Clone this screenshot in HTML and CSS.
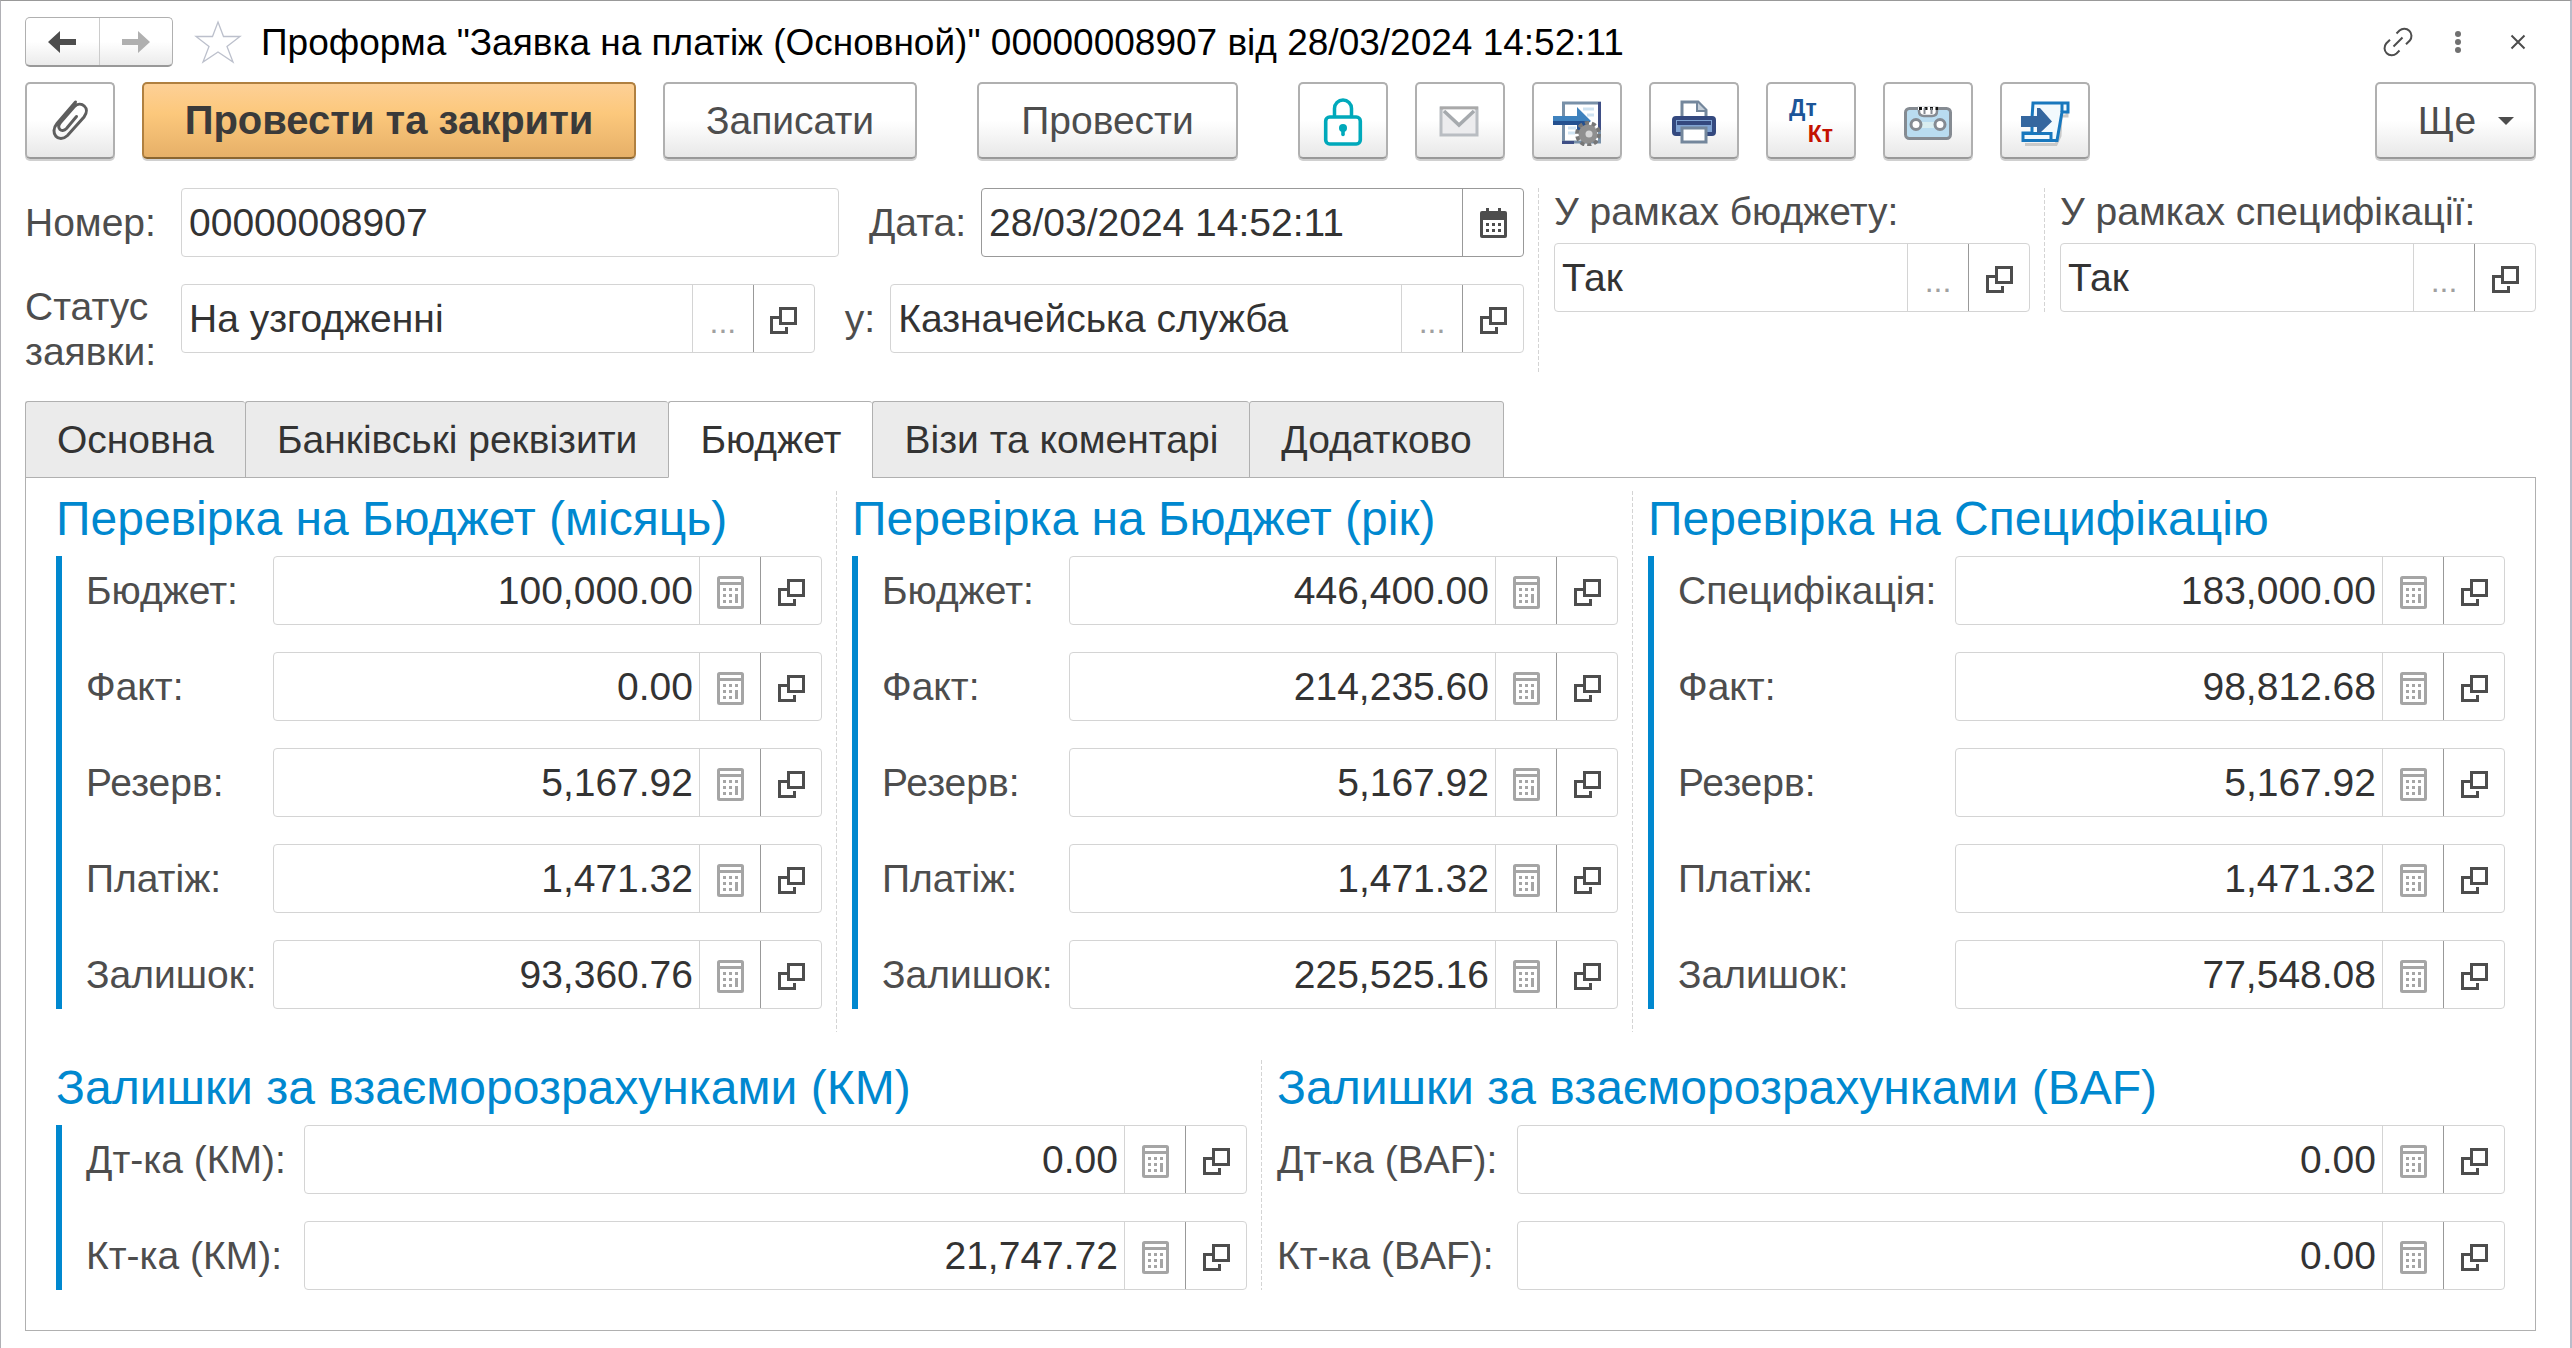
FILE: index.html
```html
<!DOCTYPE html>
<html lang="uk">
<head>
<meta charset="utf-8">
<title>Заявка на платіж</title>
<link rel="stylesheet" href="styles.css">
</head>
<body>
<svg class="sprite" aria-hidden="true">
  <symbol id="open" viewBox="0 0 27 27"><path d="M9 9H0V27H18V20H15V24H3V12H9Z" fill="#4d4d4d"/><path d="M10.500 1.500H25.500V16.500H10.500Z" fill="none" stroke="#4d4d4d" stroke-width="3"/></symbol>
  <symbol id="calc" viewBox="0 0 27 33"><rect x="1.500" y="1.500" width="24" height="30" rx="1" fill="none" stroke="#a5a5a5" stroke-width="3"/><path d="M3 6H24V9H3ZM6 12h3v3H6zM12 12h3v3h-3zM18 12h3v3h-3zM6 18h3v3H6zM12 18h3v3h-3zM18 18h3v9h-3zM6 24h3v3H6zM12 24h3v3h-3z" fill="#a5a5a5"/></symbol>
</svg>
<main class="window">
  <header class="titlebar">
    <div class="nav">
      <button type="button" aria-label="Назад"><svg width="28" height="22" viewBox="0 0 28 22"><path d="M0 11 12 0V8H28V14H12V22Z" fill="#4d4d4d"/></svg></button>
      <button type="button" aria-label="Вперед"><svg width="28" height="22" viewBox="0 0 28 22"><path d="M28 11 16 0V8H0V14H16V22Z" fill="#b0b0b0"/></svg></button>
    </div>
    <button type="button" class="plain star" aria-label="Обране"><svg width="48" height="44" viewBox="0 0 48 44"><path d="M24 2 29.500 16.500H46L33 26.500 39 42 24 32 9 42 15 26.500 2 16.500H18.500Z" fill="none" stroke="#bcc0cc" stroke-width="1.300"/></svg></button>
    <h1>Проформа "Заявка на платіж (Основной)" 00000008907 від 28/03/2024 14:52:11</h1>
    <div class="window-tools">
      <button type="button" class="plain" aria-label="Посилання"><svg width="30" height="30" viewBox="0 0 30 30" fill="none" stroke="#4d4d4d" stroke-width="2"><path d="M13.500 6.500 16.500 3.500A7.200 7.200 0 0 1 26.800 13.500L23 17.200M16.500 23.500 13.500 26.500A7.200 7.200 0 0 1 3.200 16.500L7 12.800M10.500 19.500 19.500 10.500"/></svg></button>
      <button type="button" class="plain" aria-label="Меню"><svg width="30" height="30" viewBox="0 0 30 30" fill="#707070"><circle cx="15" cy="7" r="3"/><circle cx="15" cy="15" r="3"/><circle cx="15" cy="23" r="3"/></svg></button>
      <button type="button" class="plain" aria-label="Закрити"><svg width="30" height="30" viewBox="0 0 30 30"><path d="M8.500 8.500 21.500 21.500M21.500 8.500 8.500 21.500" stroke="#4d4d4d" stroke-width="2"/></svg></button>
    </div>
  </header>

  <div class="toolbar">
    <button type="button" class="btn icon" aria-label="Файли"><svg width="50" height="50" viewBox="0 0 50 50"><path d="M30.500 6 12 27.500C4 37 13.500 48 22.500 39.500L39 21C46 12 36 4 29 11L15.500 26.500C11 32 16.500 37.500 21.500 32.500L31.500 20.500" fill="none" stroke="#5e5e5e" stroke-width="3" stroke-linecap="round"/></svg></button>
    <button type="button" class="btn primary">Провести та закрити</button>
    <button type="button" class="btn save">Записати</button>
    <button type="button" class="btn post">Провести</button>
    <button type="button" class="btn icon" aria-label="Блокування"><svg width="50" height="50" viewBox="0 0 50 50"><path d="M16.500 20V12.500a8.500 8.500 0 0 1 17 0V20" fill="none" stroke="#00a9bb" stroke-width="3.500"/><rect x="7.700" y="21" width="34.600" height="27" rx="4" fill="#fff" stroke="#00a9bb" stroke-width="3.600"/><circle cx="25" cy="32" r="4" fill="#00a9bb"/><path d="M25 33v5.500" stroke="#00a9bb" stroke-width="3.600" stroke-linecap="round"/></svg></button>
    <button type="button" class="btn icon" aria-label="Лист"><svg width="50" height="50" viewBox="0 0 50 50"><rect x="6" y="12" width="36" height="27" fill="#ececee" stroke="#b9bdc2" stroke-width="3"/><path d="M5 12H43" stroke="#a9a9a9" stroke-width="3"/><path d="M8 13.500H40L24 28Z" fill="#fff"/><path d="M9 15 24 29 39 15" fill="none" stroke="#a6aaae" stroke-width="3.500"/></svg></button>
    <button type="button" class="btn icon" aria-label="Обробка"><svg width="50" height="50" viewBox="0 0 50 50"><path d="M11.500 7H47.500V46H11.500Z" fill="#fff" stroke="#7890a8" stroke-width="3"/><path d="M47.500 6V34M10 46.500H22" stroke="#3f4f86" stroke-width="3"/><path d="M31 13H42M35 19H42M16 32h8M16 37h7" stroke="#cfe3f2" stroke-width="3"/><path d="M1 20H25V11L39 25 25 37V29H1Z" fill="#3f82be"/><path d="M1 25H38L25 37V29H1Z" fill="#24508f"/><circle cx="36" cy="38" r="10.500" fill="none" stroke="#777" stroke-width="5" stroke-dasharray="4 2.600"/><circle cx="36" cy="38" r="9.500" fill="#8f8f8f"/><circle cx="37" cy="38" r="3.500" fill="#d5d5d5"/></svg></button>
    <button type="button" class="btn icon" aria-label="Друк"><svg width="50" height="50" viewBox="0 0 50 50"><path d="M13 24V6H29L37 14V24" fill="#fff" stroke="#74879c" stroke-width="3"/><path d="M28 6V15H37" fill="#c4ced8" stroke="#74879c" stroke-width="2"/><rect x="5" y="22" width="40" height="16" rx="2" fill="#7fa3d2" stroke="#34497f" stroke-width="4"/><path d="M8 27H42" stroke="#34497f" stroke-width="4"/><path d="M13 32H37V46H13Z" fill="#fff" stroke="#74879c" stroke-width="3"/></svg></button>
    <button type="button" class="btn icon" aria-label="Дебет і кредит"><span class="dk"><span class="dt">Дт</span><span class="kt">Кт</span></span></button>
    <button type="button" class="btn icon" aria-label="Запис"><svg width="50" height="50" viewBox="0 0 50 50"><rect x="2.500" y="12.500" width="45" height="30" rx="4" fill="#b9dcf0" stroke="#858b92" stroke-width="3"/><path d="M16 12V15Q16 20 21 20H29Q34 20 34 15V12Z" fill="#fff" stroke="#858b92" stroke-width="2.500"/><path d="M15 12.500H36" stroke="#fff" stroke-width="3"/><path d="M16 12.500H36" stroke="#111" stroke-width="3" stroke-dasharray="3 2.500"/><path d="M21.500 12v6M28.500 12v6" stroke="#858b92" stroke-width="2"/><path d="M19 26h12v6H19z" fill="#d8edf0"/><circle cx="13" cy="28.500" r="5" fill="#fff" stroke="#858b92" stroke-width="3"/><circle cx="37" cy="28.500" r="5" fill="#fff" stroke="#858b92" stroke-width="3"/></svg></button>
    <button type="button" class="btn icon" aria-label="Сценарій"><svg width="50" height="50" viewBox="0 0 50 50"><path d="M5 48.500H36L40 40 41 20H47V16" fill="none" stroke="#c9c9c9" stroke-width="3"/><path d="M12 22 13 7H48V16H42L37 44.500H3V37H12Z" fill="#f2f9fd" stroke="#1877bd" stroke-width="3"/><path d="M4 37.500H31V44" fill="none" stroke="#1877bd" stroke-width="3"/><path d="M42 8V16" stroke="#1877bd" stroke-width="3"/><path d="M1 20H17V12H20L32 25.500 20 37H17V31H1Z" fill="#35679f"/></svg></button>
    <button type="button" class="btn more">Ще<svg width="16" height="8" viewBox="0 0 16 8"><path d="M0 0H16L8 8Z" fill="#4d4d4d"/></svg></button>
  </div>

  <section class="head">
    <div class="head-main">
      <div class="line">
        <label class="l-main l-single" for="num">Номер:</label>
        <div class="field f-num"><input id="num" value="00000008907"></div>
        <label class="l-mid l-single" for="date">Дата:</label>
        <div class="field strong f-date"><input id="date" value="28/03/2024 14:52:11"><button type="button" aria-label="Календар"><svg width="27" height="30" viewBox="0 0 27 30"><path d="M0 5Q0 3 2 3H6V0H9V3H18V0H21V3H25Q27 3 27 5V28Q27 30 25 30H2Q0 30 0 28Z" fill="#4d4d4d"/><path d="M3 12H24V27H3Z" fill="#fff"/><path d="M6 15h3v3H6zM12 15h3v3h-3zM18 15h3v3h-3zM6 21h3v3H6zM12 21h3v3h-3zM18 21h3v3h-3z" fill="#4d4d4d"/></svg></button></div>
      </div>
      <div class="line">
        <label class="l-main" for="status">Статус заявки:</label>
        <div class="field f-half"><input id="status" value="На узгодженні"><button type="button" class="pick">...</button><button type="button" class="go" aria-label="Відкрити"><svg width="27" height="27"><use href="#open"/></svg></button></div>
        <label class="l-mid l-single" for="at">у:</label>
        <div class="field f-half"><input id="at" value="Казначейська служба"><button type="button" class="pick">...</button><button type="button" class="go" aria-label="Відкрити"><svg width="27" height="27"><use href="#open"/></svg></button></div>
      </div>
    </div>
    <div class="head-side">
      <label for="inb">У рамках бюджету:</label>
      <div class="field"><input id="inb" value="Так"><button type="button" class="pick">...</button><button type="button" class="go" aria-label="Відкрити"><svg width="27" height="27"><use href="#open"/></svg></button></div>
    </div>
    <div class="head-side">
      <label for="ins">У рамках специфікації:</label>
      <div class="field"><input id="ins" value="Так"><button type="button" class="pick">...</button><button type="button" class="go" aria-label="Відкрити"><svg width="27" height="27"><use href="#open"/></svg></button></div>
    </div>
  </section>

  <div class="tabs" role="tablist">
    <button type="button" role="tab">Основна</button>
    <button type="button" role="tab">Банківські реквізити</button>
    <button type="button" role="tab" class="active" aria-selected="true">Бюджет</button>
    <button type="button" role="tab">Візи та коментарі</button>
    <button type="button" role="tab">Додатково</button>
  </div>

  <div class="panel">
    <div class="checks">
      <section class="group">
        <h2>Перевірка на Бюджет (місяць)</h2>
        <div class="rows barred">
          <div class="row"><label for="m1">Бюджет:</label><div class="field num"><input id="m1" value="100,000.00"><button type="button" class="calc" aria-label="Калькулятор"><svg width="27" height="33"><use href="#calc"/></svg></button><button type="button" class="go" aria-label="Відкрити"><svg width="27" height="27"><use href="#open"/></svg></button></div></div>
          <div class="row"><label for="m2">Факт:</label><div class="field num"><input id="m2" value="0.00"><button type="button" class="calc" aria-label="Калькулятор"><svg width="27" height="33"><use href="#calc"/></svg></button><button type="button" class="go" aria-label="Відкрити"><svg width="27" height="27"><use href="#open"/></svg></button></div></div>
          <div class="row"><label for="m3">Резерв:</label><div class="field num"><input id="m3" value="5,167.92"><button type="button" class="calc" aria-label="Калькулятор"><svg width="27" height="33"><use href="#calc"/></svg></button><button type="button" class="go" aria-label="Відкрити"><svg width="27" height="27"><use href="#open"/></svg></button></div></div>
          <div class="row"><label for="m4">Платіж:</label><div class="field num"><input id="m4" value="1,471.32"><button type="button" class="calc" aria-label="Калькулятор"><svg width="27" height="33"><use href="#calc"/></svg></button><button type="button" class="go" aria-label="Відкрити"><svg width="27" height="27"><use href="#open"/></svg></button></div></div>
          <div class="row"><label for="m5">Залишок:</label><div class="field num"><input id="m5" value="93,360.76"><button type="button" class="calc" aria-label="Калькулятор"><svg width="27" height="33"><use href="#calc"/></svg></button><button type="button" class="go" aria-label="Відкрити"><svg width="27" height="27"><use href="#open"/></svg></button></div></div>
        </div>
      </section>
      <section class="group">
        <h2>Перевірка на Бюджет (рік)</h2>
        <div class="rows barred">
          <div class="row"><label for="y1">Бюджет:</label><div class="field num"><input id="y1" value="446,400.00"><button type="button" class="calc" aria-label="Калькулятор"><svg width="27" height="33"><use href="#calc"/></svg></button><button type="button" class="go" aria-label="Відкрити"><svg width="27" height="27"><use href="#open"/></svg></button></div></div>
          <div class="row"><label for="y2">Факт:</label><div class="field num"><input id="y2" value="214,235.60"><button type="button" class="calc" aria-label="Калькулятор"><svg width="27" height="33"><use href="#calc"/></svg></button><button type="button" class="go" aria-label="Відкрити"><svg width="27" height="27"><use href="#open"/></svg></button></div></div>
          <div class="row"><label for="y3">Резерв:</label><div class="field num"><input id="y3" value="5,167.92"><button type="button" class="calc" aria-label="Калькулятор"><svg width="27" height="33"><use href="#calc"/></svg></button><button type="button" class="go" aria-label="Відкрити"><svg width="27" height="27"><use href="#open"/></svg></button></div></div>
          <div class="row"><label for="y4">Платіж:</label><div class="field num"><input id="y4" value="1,471.32"><button type="button" class="calc" aria-label="Калькулятор"><svg width="27" height="33"><use href="#calc"/></svg></button><button type="button" class="go" aria-label="Відкрити"><svg width="27" height="27"><use href="#open"/></svg></button></div></div>
          <div class="row"><label for="y5">Залишок:</label><div class="field num"><input id="y5" value="225,525.16"><button type="button" class="calc" aria-label="Калькулятор"><svg width="27" height="33"><use href="#calc"/></svg></button><button type="button" class="go" aria-label="Відкрити"><svg width="27" height="27"><use href="#open"/></svg></button></div></div>
        </div>
      </section>
      <section class="group spec">
        <h2>Перевірка на Специфікацію</h2>
        <div class="rows barred">
          <div class="row"><label for="s1">Специфікація:</label><div class="field num"><input id="s1" value="183,000.00"><button type="button" class="calc" aria-label="Калькулятор"><svg width="27" height="33"><use href="#calc"/></svg></button><button type="button" class="go" aria-label="Відкрити"><svg width="27" height="27"><use href="#open"/></svg></button></div></div>
          <div class="row"><label for="s2">Факт:</label><div class="field num"><input id="s2" value="98,812.68"><button type="button" class="calc" aria-label="Калькулятор"><svg width="27" height="33"><use href="#calc"/></svg></button><button type="button" class="go" aria-label="Відкрити"><svg width="27" height="27"><use href="#open"/></svg></button></div></div>
          <div class="row"><label for="s3">Резерв:</label><div class="field num"><input id="s3" value="5,167.92"><button type="button" class="calc" aria-label="Калькулятор"><svg width="27" height="33"><use href="#calc"/></svg></button><button type="button" class="go" aria-label="Відкрити"><svg width="27" height="27"><use href="#open"/></svg></button></div></div>
          <div class="row"><label for="s4">Платіж:</label><div class="field num"><input id="s4" value="1,471.32"><button type="button" class="calc" aria-label="Калькулятор"><svg width="27" height="33"><use href="#calc"/></svg></button><button type="button" class="go" aria-label="Відкрити"><svg width="27" height="27"><use href="#open"/></svg></button></div></div>
          <div class="row"><label for="s5">Залишок:</label><div class="field num"><input id="s5" value="77,548.08"><button type="button" class="calc" aria-label="Калькулятор"><svg width="27" height="33"><use href="#calc"/></svg></button><button type="button" class="go" aria-label="Відкрити"><svg width="27" height="27"><use href="#open"/></svg></button></div></div>
        </div>
      </section>
    </div>
    <div class="balances">
      <section class="group km">
        <h2>Залишки за взаєморозрахунками (КМ)</h2>
        <div class="rows barred">
          <div class="row"><label for="k1">Дт-ка (КМ):</label><div class="field num"><input id="k1" value="0.00"><button type="button" class="calc" aria-label="Калькулятор"><svg width="27" height="33"><use href="#calc"/></svg></button><button type="button" class="go" aria-label="Відкрити"><svg width="27" height="27"><use href="#open"/></svg></button></div></div>
          <div class="row"><label for="k2">Кт-ка (КМ):</label><div class="field num"><input id="k2" value="21,747.72"><button type="button" class="calc" aria-label="Калькулятор"><svg width="27" height="33"><use href="#calc"/></svg></button><button type="button" class="go" aria-label="Відкрити"><svg width="27" height="27"><use href="#open"/></svg></button></div></div>
        </div>
      </section>
      <section class="group baf">
        <h2>Залишки за взаєморозрахунками (BAF)</h2>
        <div class="rows">
          <div class="row"><label for="b1">Дт-ка (BAF):</label><div class="field num"><input id="b1" value="0.00"><button type="button" class="calc" aria-label="Калькулятор"><svg width="27" height="33"><use href="#calc"/></svg></button><button type="button" class="go" aria-label="Відкрити"><svg width="27" height="27"><use href="#open"/></svg></button></div></div>
          <div class="row"><label for="b2">Кт-ка (BAF):</label><div class="field num"><input id="b2" value="0.00"><button type="button" class="calc" aria-label="Калькулятор"><svg width="27" height="33"><use href="#calc"/></svg></button><button type="button" class="go" aria-label="Відкрити"><svg width="27" height="27"><use href="#open"/></svg></button></div></div>
        </div>
      </section>
    </div>
  </div>
</main>
</body>
</html>
```
FILE: styles.css
```css
* {
  box-sizing: border-box;
}

body {
  margin: 0;
  background: #fff;
  color: #4d4d4d;
  font: 39px/45px "Liberation Sans", Arial, sans-serif;
}

button,
input {
  margin: 0;
  font: inherit;
  color: inherit;
}

svg {
  display: block;
  flex: none;
}

.sprite {
  display: none;
}

.window {
  min-height: 100vh;
  padding: 16px 34px 16px 24px;
  border-top: 1px solid #999;
  border-left: 1px solid #b0b0b5;
  border-right: 2px solid #b9bdca;
}

/* Title bar */
.titlebar {
  display: flex;
  align-items: center;
  height: 50px;
}

.nav {
  display: flex;
  width: 148px;
  height: 50px;
  border: 1px solid #b0b0b0;
  border-bottom: 2px solid #999;
  border-radius: 5px;
  background: linear-gradient(#fff 50%, #ebebeb);
}

.nav button {
  flex: 1;
  display: flex;
  align-items: center;
  justify-content: center;
  padding: 0;
  border: 0;
  background: none;
}

.nav button + button {
  border-left: 1px solid #ccc;
}

.plain {
  padding: 0;
  border: 0;
  background: none;
}

.star {
  margin-left: 21px;
}

h1 {
  flex: 1;
  margin: 0 0 0 19px;
  color: #000;
  font-size: 37px;
  font-weight: 400;
  line-height: 45px;
  white-space: nowrap;
}

.window-tools {
  display: flex;
  gap: 30px;
  margin-right: 3px;
}

/* Command bar */
.toolbar {
  display: flex;
  gap: 27px;
  margin-top: 15px;
}

.btn {
  display: flex;
  align-items: center;
  justify-content: center;
  height: 77px;
  padding: 0;
  border: 2px solid #b0b0b0;
  border-bottom-color: #999;
  border-radius: 5px;
  background: linear-gradient(#fff 50%, #e8e8e8);
  box-shadow: 0 2px 0 #d0d0d0;
  white-space: nowrap;
}

.icon {
  width: 90px;
}

.primary {
  width: 494px;
  border-color: #b08040;
  border-bottom-color: #8a6530;
  background: linear-gradient(#fdd096, #fcc87c 40%, #e6b068);
  color: #3a3a3a;
  font-size: 40px;
  font-weight: 700;
}

.save {
  width: 254px;
}

.post {
  width: 261px;
  margin: 0 33px;
}

.more {
  gap: 22px;
  width: 161px;
  margin-left: auto;
  padding-left: 21px;
}

.dk {
  display: flex;
  flex-direction: column;
  width: 44px;
  font-size: 23px;
  font-weight: 700;
  line-height: 26px;
}

.dt {
  align-self: flex-start;
  color: #1d5598;
}

.kt {
  align-self: flex-end;
  color: #c41200;
}

/* Fields */
.field {
  display: flex;
  height: 69px;
  min-width: 0;
  border: 1px solid #d4d4d4;
  border-radius: 4px;
  background: #fff;
}

.field.strong {
  border-color: #999;
}

.field input {
  flex: 1;
  width: 0;
  min-width: 0;
  padding: 0 6px 0 7px;
  border: 0;
  outline: 0;
  background: none;
  color: #333;
}

.num input {
  text-align: right;
}

.field button {
  display: flex;
  flex: 0 0 61px;
  align-items: center;
  justify-content: center;
  padding: 0;
  border: 0;
  border-left: 1px solid #d4d4d4;
  background: none;
}

.field.strong button,
.field .go {
  border-left-color: #999;
}

.field .go,
.field .calc {
  padding-top: 4px;
}

.field .pick {
  padding-top: 8px;
  color: #a0a0a0;
  font-size: 32px;
}

/* Document header */
.head {
  display: grid;
  grid-template-columns: 1514fr 506fr 491fr;
  align-items: start;
  margin-top: 29px;
}

.head-main,
.head-side:nth-child(2),
.group:not(:last-child) {
  padding-right: 15px;
  background: repeating-linear-gradient(#d4d4d4 0 4px, transparent 4px 6px) right / 1px 100% no-repeat;
}

.head-side {
  padding-left: 15px;
}

.head-side label {
  display: block;
  padding: 1px 0 9px;
  white-space: nowrap;
}

.line {
  display: flex;
  align-items: flex-start;
}

.line + .line {
  margin-top: 27px;
}

.l-main {
  flex: 0 0 156px;
}

.l-mid {
  margin: 0 15px 0 30px;
}

.l-single {
  padding: 12px 0;
}

.f-num {
  flex: 656 1 0;
}

.f-date {
  flex: 541 1 0;
}

.f-half {
  flex: 1 1 0;
}

/* Tabs */
.tabs {
  position: relative;
  z-index: 1;
  display: flex;
  margin-top: 27px;
}

.tabs button {
  height: 77px;
  padding: 0 31px;
  border: 1px solid #b0b0b0;
  border-right-width: 0;
  border-radius: 3px 3px 0 0;
  background: #ebebeb;
  color: #333;
  white-space: nowrap;
}

.tabs button:last-child {
  border-right-width: 1px;
}

.tabs .active {
  border-bottom-color: #fff;
  background: #fff;
}

.panel {
  margin-top: -1px;
  padding: 13px 30px 40px;
  border: 1px solid #b0b0b0;
}

.checks {
  display: grid;
  grid-template-columns: 781fr 796fr 872fr;
}

.checks .group {
  padding-bottom: 23px;
}

.balances {
  display: grid;
  grid-template-columns: 1206fr 1243fr;
  margin-top: 28px;
}

.group + .group {
  padding-left: 15px;
}

h2 {
  margin: 0;
  padding-bottom: 9px;
  color: #0088cf;
  font-size: 48px;
  font-weight: 400;
  line-height: 56px;
  white-space: nowrap;
}

.rows {
  display: flex;
  flex-direction: column;
  gap: 27px;
}

.barred {
  padding-left: 24px;
  border-left: 6px solid #0088cf;
}

.row {
  display: flex;
  align-items: center;
}

.row label {
  flex: 0 0 187px;
  white-space: nowrap;
}

.row .field {
  flex: 1;
}

.spec .row label {
  flex-basis: 277px;
}

.km .row label {
  flex-basis: 218px;
}

.baf .row label {
  flex-basis: 240px;
}
```
